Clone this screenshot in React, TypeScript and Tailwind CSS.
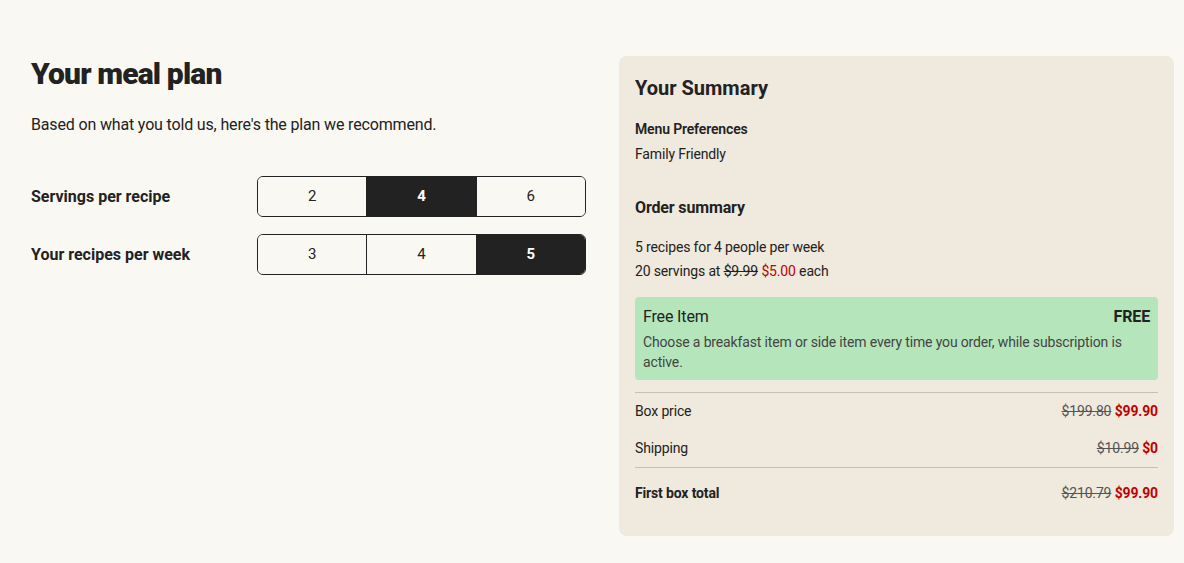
import React from "react";

const font = { fontFamily: "Roboto, 'Noto Sans', sans-serif" };

const Segmented = ({ options, active }: { options: number[]; active: number }) => (
  <div className="flex w-[329px] h-[41px] rounded-[6px] border border-[#222] overflow-hidden">
    {options.map((o, i) => (
      <button
        key={o}
        className={
          "flex-1 flex items-center justify-center text-[15px] " +
          (i > 0 ? "border-l border-[#222] " : "") +
          (o === active ? "bg-[#222] text-white font-bold" : "bg-[#faf8f3] text-[#222]")
        }
      >
        {o}
      </button>
    ))}
  </div>
);

const PriceRow = ({ label, was, now, bold }: { label: string; was: string; now: string; bold?: boolean }) => (
  <div className="flex items-center justify-between text-[14px] tracking-[-0.15px]">
    <span className={bold ? "font-bold text-[#222]" : "text-[#222]"}>{label}</span>
    <span>
      <span className="line-through text-[#555]">{was}</span>{" "}
      <span className="font-bold text-[#c00000]">{now}</span>
    </span>
  </div>
);

export default function App() {
  return (
    <div className="min-h-[563px] w-full bg-[#faf8f3] text-[#222]" style={font}>
      <div className="flex gap-[33px] pl-[31px] pr-[10px] pt-[56px]">
        <div className="w-[555px] pt-[2px]">
          <h1 className="text-[30px] font-black tracking-[-0.85px] leading-[32px]">Your meal plan</h1>
          <p className="mt-[23px] text-[16px] tracking-[-0.16px] leading-[24px]">
            Based on what you told us, here's the plan we recommend.
          </p>
          <div className="mt-[39px] flex flex-col gap-[17px]">
            <div className="flex items-center justify-between">
              <span className="text-[16px] font-bold">Servings per recipe</span>
              <Segmented options={[2, 4, 6]} active={4} />
            </div>
            <div className="flex items-center justify-between">
              <span className="text-[16px] font-bold">Your recipes per week</span>
              <Segmented options={[3, 4, 5]} active={5} />
            </div>
          </div>
        </div>

        <div className="w-[555px] h-[480px] rounded-[8px] bg-[#f0e9dd] px-[16px] pt-[20px] tracking-[-0.15px]">
          <h2 className="text-[20px] font-bold leading-[24px] tracking-normal">Your Summary</h2>
          <div className="mt-[20px] text-[14px] font-semibold leading-[18px]">Menu Preferences</div>
          <div className="mt-[7px] text-[14px] leading-[18px]">Family Friendly</div>
          <div className="mt-[34px] text-[16px] font-bold leading-[22px]">Order summary</div>
          <div className="mt-[16px] text-[14px] leading-[24px]">
            <div>5 recipes for 4 people per week</div>
            <div>
              20 servings at <span className="line-through">$9.99</span>{" "}
              <span className="text-[#c00000]">$5.00</span> each
            </div>
          </div>
          <div className="mt-[14px] rounded-[4px] bg-[#b5e6bb] px-[8px] pt-[10px] pb-[8px]">
            <div className="flex items-center justify-between">
              <span className="text-[16px] leading-[20px]">Free Item</span>
              <span className="text-[16px] font-bold leading-[20px]">FREE</span>
            </div>
            <p className="mt-[5px] text-[14px] leading-[20px] text-[#444]">
              Choose a breakfast item or side item every time you order, while subscription is active.
            </p>
          </div>
          <div className="mt-[12px] border-t border-[#c4c0b8]" />
          <div className="pt-[8px] flex flex-col gap-[16px]">
            <PriceRow label="Box price" was="$199.80" now="$99.90" />
            <PriceRow label="Shipping" was="$10.99" now="$0" />
          </div>
          <div className="mt-[8px] border-t border-[#c4c0b8]" />
          <div className="pt-[15px]">
            <PriceRow label="First box total" was="$210.79" now="$99.90" bold />
          </div>
        </div>
      </div>
    </div>
  );
}
